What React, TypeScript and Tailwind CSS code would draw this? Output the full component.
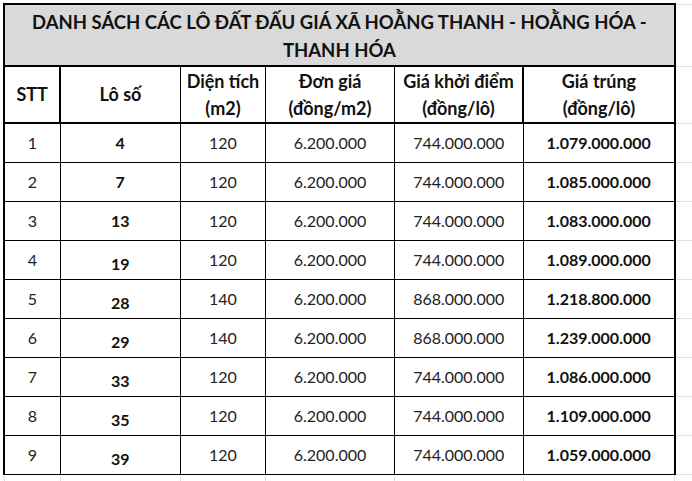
const rows = [
  { stt: 1, lo: "4", dt: "120", dg: "6.200.000", kd: "744.000.000", gt: "1.079.000.000", low: false },
  { stt: 2, lo: "7", dt: "120", dg: "6.200.000", kd: "744.000.000", gt: "1.085.000.000", low: false },
  { stt: 3, lo: "13", dt: "120", dg: "6.200.000", kd: "744.000.000", gt: "1.083.000.000", low: false },
  { stt: 4, lo: "19", dt: "120", dg: "6.200.000", kd: "744.000.000", gt: "1.089.000.000", low: true },
  { stt: 5, lo: "28", dt: "140", dg: "6.200.000", kd: "868.000.000", gt: "1.218.800.000", low: true },
  { stt: 6, lo: "29", dt: "140", dg: "6.200.000", kd: "868.000.000", gt: "1.239.000.000", low: true },
  { stt: 7, lo: "33", dt: "120", dg: "6.200.000", kd: "744.000.000", gt: "1.086.000.000", low: true },
  { stt: 8, lo: "35", dt: "120", dg: "6.200.000", kd: "744.000.000", gt: "1.109.000.000", low: true },
  { stt: 9, lo: "39", dt: "120", dg: "6.200.000", kd: "744.000.000", gt: "1.059.000.000", low: true },
];

export default function App() {
  return (
    <div
      className="w-[692px] h-[481px] overflow-hidden bg-white pt-[3px] pl-[3px]"
      style={{ fontFamily: "Lato, 'Noto Sans', sans-serif" }}
    >
      <table className="table-fixed border-collapse text-[#222]">
        <colgroup>
          <col className="w-[57px]" />
          <col className="w-[123px]" />
          <col className="w-[87px]" />
          <col className="w-[130px]" />
          <col className="w-[130px]" />
          <col className="w-[153px]" />
          <col className="w-[20px]" />
        </colgroup>
        <tbody>
          {/* Title */}
          <tr className="h-[62px]">
            <td
              colSpan={6}
              className="whitespace-nowrap border-2 border-black bg-[#d9d9d9] pt-[2px] text-center text-[18.5px] font-bold leading-[28px] text-[#111]"
            >
              DANH SÁCH CÁC LÔ ĐẤT ĐẤU GIÁ XÃ HOẰNG THANH - HOẰNG HÓA -
              <br />
              THANH HÓA
            </td>
            <td className="border-y border-[#e2e2e2]" />
          </tr>

          {/* Header */}
          <tr className="h-[57px] text-[18px] font-bold leading-[27px] text-[#111]">
            <td className="border-2 border-black text-center">STT</td>
            <td className="border border-black border-b-2 text-center">Lô số</td>
            <td className="border border-black border-b-2 text-center">
              Diện tích
              <br />
              (m2)
            </td>
            <td className="border border-black border-b-2 text-center">
              Đơn giá
              <br />
              (đồng/m2)
            </td>
            <td className="border border-black border-b-2 text-center">
              Giá khởi điểm
              <br />
              (đồng/lô)
            </td>
            <td className="border-2 border-black text-center">
              Giá trúng
              <br />
              (đồng/lô)
            </td>
            <td className="border-y border-[#e2e2e2]" />
          </tr>

          {/* Data */}
          {rows.map((r) => (
            <tr key={r.stt} className="h-[39px] text-[16px] text-[#222]">
              <td className="border border-black border-l-2 text-center">{r.stt}</td>
              <td
                className={`border border-black text-center font-bold text-[#111] ${
                  r.low ? "align-bottom pb-[3px]" : "align-middle"
                }`}
              >
                {r.lo}
              </td>
              <td className="border border-black text-center">{r.dt}</td>
              <td className="border border-black text-center">{r.dg}</td>
              <td className="border border-black text-center">{r.kd}</td>
              <td className="border border-black border-r-2 text-center font-bold text-[#111]">{r.gt}</td>
              <td className="border-y border-[#e2e2e2]" />
            </tr>
          ))}

          {/* Empty sheet row */}
          <tr className="h-[20px]">
            <td className="border-x border-[#e2e2e2]" />
            <td className="border-x border-[#e2e2e2]" />
            <td className="border-x border-[#e2e2e2]" />
            <td className="border-x border-[#e2e2e2]" />
            <td className="border-x border-[#e2e2e2]" />
            <td className="border-x border-[#e2e2e2]" />
            <td />
          </tr>
        </tbody>
      </table>
    </div>
  );
}
